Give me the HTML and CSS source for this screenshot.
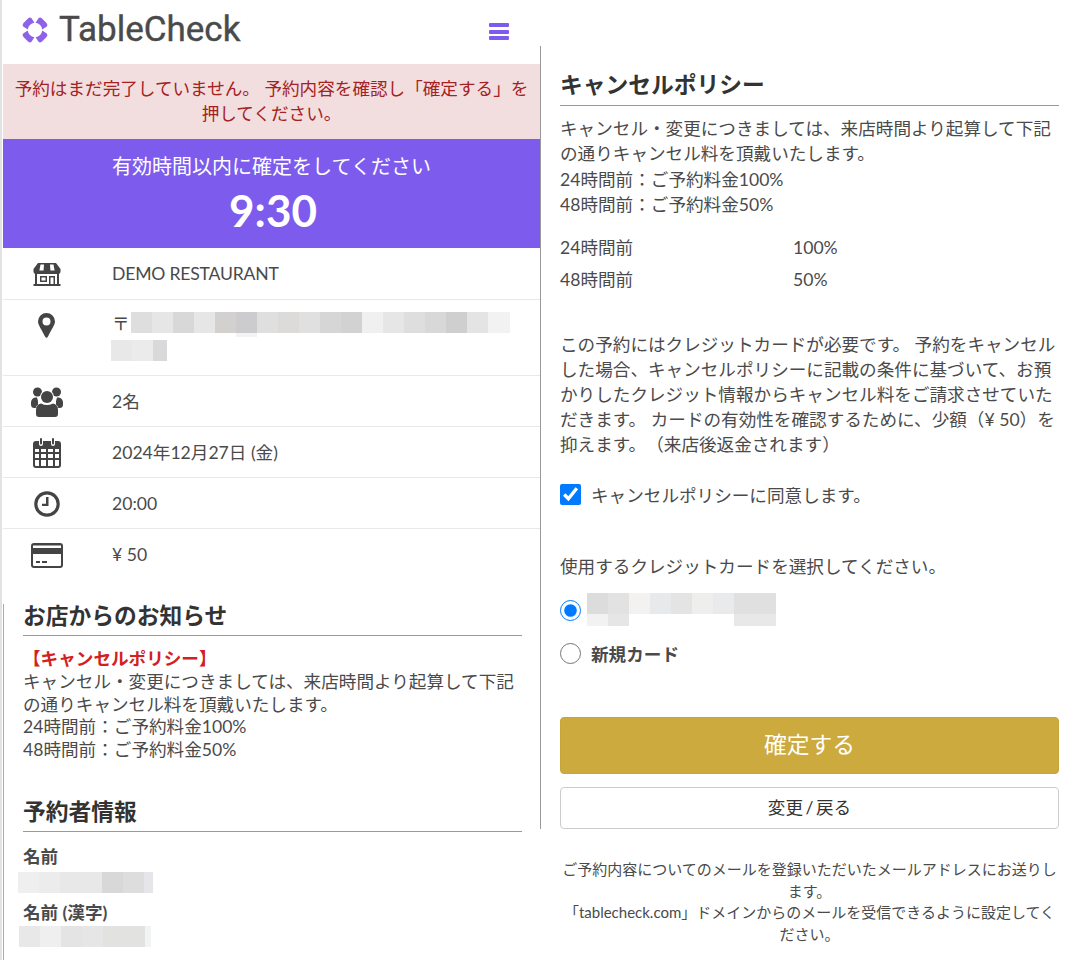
FILE: index.html
```html
<!DOCTYPE html>
<html lang="ja">
<head>
<meta charset="utf-8">
<title>TableCheck</title>
<link rel="stylesheet" href="styles.css">
</head>
<body>
<div class="page">
  <main class="left">
    <header class="topbar">
      <div class="logo">
        <svg class="logo-mark" viewBox="0 0 26 26" aria-hidden="true">
          <path d="M6 1.5 Q8 -0.3 9.5 1.2 L12.4 5.8 A7.3 7.3 0 0 0 5.8 12.4 L1.2 9.5 Q-0.3 8 1.5 6 Z"/>
          <path d="M20 1.5 Q18 -0.3 16.5 1.2 L13.6 5.8 A7.3 7.3 0 0 1 20.2 12.4 L24.8 9.5 Q26.3 8 24.5 6 Z"/>
          <path d="M6 24.5 Q8 26.3 9.5 24.8 L12.4 20.2 A7.3 7.3 0 0 1 5.8 13.6 L1.2 16.5 Q-0.3 18 1.5 20 Z"/>
          <path d="M20 24.5 Q18 26.3 16.5 24.8 L13.6 20.2 A7.3 7.3 0 0 0 20.2 13.6 L24.8 16.5 Q26.3 18 24.5 20 Z"/>
        </svg>
        <span class="logo-text">TableCheck</span>
      </div>
      <div class="burger" aria-label="menu"><i></i><i></i><i></i></div>
    </header>

    <div class="alert">予約はまだ完了していません。 予約内容を確認し「確定する」を押してください。</div>

    <section class="timer">
      <div class="timer-title">有効時間以内に確定をしてください</div>
      <div class="timer-count">9:30</div>
    </section>

    <ul class="details">
      <li class="row row-first">
        <span class="row-icon">
          <svg width="28" height="23" viewBox="0 0 28 23" aria-hidden="true">
            <path d="M5 0H23L27.5 6V8.5Q27.5 11 24.5 11H3.5Q.5 11 .5 8.5V6Z"/>
            <path class="cut" d="M7.5 1.5H11L10.6 7.5H6.4ZM17 1.5H20.5L21.6 7.5H17.4Z"/>
            <path d="M2 10H4V21H24V10H26V21H27.5V23H.5V21H2Z"/>
            <path d="M7 13H14V19H7ZM8.5 14.5V17.5H12.5V14.5ZM16 13H22V21H20.5V14.5H17.5V21H16Z"/>
          </svg>
        </span>
        <span class="venue">DEMO RESTAURANT</span>
      </li>
      <li class="row row-address">
        <span class="row-icon">
          <svg width="17" height="25" viewBox="0 0 17 25" aria-hidden="true">
            <path fill-rule="evenodd" d="M8.5 0A8.5 8.5 0 0 1 17 8.5C17 12 13 17 10 23.5Q8.5 26 7 23.5C4 17 0 12 0 8.5A8.5 8.5 0 0 1 8.5 0ZM8.5 4.5A4 4 0 1 0 8.5 12.5A4 4 0 1 0 8.5 4.5Z"/>
          </svg>
        </span>
        <div class="address">
          <div class="address-line"><span class="postal">〒</span><span class="blur blur-addr1"></span></div>
          <div class="blur blur-addr2"></div>
        </div>
      </li>
      <li class="row">
        <span class="row-icon">
          <svg width="32" height="30" viewBox="0 0 32 30" aria-hidden="true">
            <circle cx="6.5" cy="5" r="4.5"/><circle cx="25.5" cy="5" r="4.5"/>
            <path d="M0 15.5A5 5 0 0 1 6 10.5L7 14V21H3.5Q0 21 0 17.5ZM32 15.5A5 5 0 0 0 26 10.5L25 14V21H28.5Q32 21 32 17.5Z"/>
            <circle class="halo" cx="16" cy="10" r="7"/>
            <circle cx="16" cy="10" r="6"/>
            <path class="halo-path" d="M10 16.5Q16 19.5 22 16.5Q27 17.5 27 23V27Q27 30 24 30H8Q5 30 5 27V23Q5 17.5 10 16.5Z"/>
          </svg>
        </span>
        <span>2名</span>
      </li>
      <li class="row">
        <span class="row-icon">
          <svg width="28" height="30" viewBox="0 0 28 30" aria-hidden="true">
            <path fill-rule="evenodd" d="M3 3H6V6Q6 8 8 8T10 6V3H18V6Q18 8 20 8T22 6V3H25Q28 3 28 6V27Q28 30 25 30H3Q0 30 0 27V6Q0 3 3 3ZM2 11V14H6V11ZM8 11V14H13V11ZM15 11V14H20V11ZM22 11V14H26V11ZM2 16V20H6V16ZM8 16V20H13V16ZM15 16V20H20V16ZM22 16V20H26V16ZM2 22V27Q2 28 3 28H6V22ZM8 22V28H13V22ZM15 22V28H20V22ZM22 22V28H25Q26 28 26 27V22Z"/>
            <rect x="7" y="0" width="2" height="6.5" rx="1"/><rect x="19" y="0" width="2" height="6.5" rx="1"/>
          </svg>
        </span>
        <span>2024年12月27日 (金)</span>
      </li>
      <li class="row">
        <span class="row-icon">
          <svg width="26" height="26" viewBox="0 0 26 26" aria-hidden="true">
            <circle class="ring" cx="13" cy="13" r="11.2"/>
            <path d="M12 6H14.5V15H8V12.8H12Z"/>
          </svg>
        </span>
        <span>20:00</span>
      </li>
      <li class="row row-last">
        <span class="row-icon">
          <svg width="32" height="25" viewBox="0 0 32 25" aria-hidden="true">
            <path fill-rule="evenodd" d="M3 0H29Q32 0 32 3V22Q32 25 29 25H3Q0 25 0 22V3Q0 0 3 0ZM2 2.5V5H30V2.5ZM2 11V22Q2 23 3 23H29Q30 23 30 22V11ZM5 18H9V20H5ZM11 18H16V20H11Z"/>
          </svg>
        </span>
        <span>¥ 50</span>
      </li>
    </ul>

    <div class="info">
      <h2 class="heading">お店からのお知らせ</h2>
      <div class="notice">
        <strong class="notice-title">【キャンセルポリシー】</strong><br>
        キャンセル・変更につきましては、来店時間より起算して下記の通りキャンセル料を頂戴いたします。<br>
        24時間前：ご予約料金100%<br>
        48時間前：ご予約料金50%
      </div>
      <h2 class="heading heading-guest">予約者情報</h2>
      <div class="field-label">名前</div>
      <div class="blur blur-name"></div>
      <div class="field-label field-label-2">名前 (漢字)</div>
      <div class="blur blur-kanji"></div>
    </div>
  </main>

  <aside class="right">
    <div class="right-rule">
      <h2 class="heading heading-policy">キャンセルポリシー</h2>
      <p class="policy-text">キャンセル・変更につきましては、来店時間より起算して下記の通りキャンセル料を頂戴いたします。<br>24時間前：ご予約料金100%<br>48時間前：ご予約料金50%</p>
      <div class="fee"><span>24時間前</span><span>100%</span></div>
      <div class="fee"><span>48時間前</span><span>50%</span></div>
      <p class="card-note">この予約にはクレジットカードが必要です。 予約をキャンセルした場合、キャンセルポリシーに記載の条件に基づいて、お預かりしたクレジット情報からキャンセル料をご請求させていただきます。 カードの有効性を確認するために、少額（¥ 50）を抑えます。（来店後返金されます）</p>
      <label class="agree"><input class="check" type="checkbox" checked><span>キャンセルポリシーに同意します。</span></label>
      <p class="select-card">使用するクレジットカードを選択してください。</p>
      <div class="radio-row radio-saved">
        <input class="radio" type="radio" name="card" checked>
        <div class="blur-card"><div class="blur blur-card1"></div><div class="blur blur-card2"></div></div>
      </div>
      <label class="radio-row radio-new"><input class="radio" type="radio" name="card"><strong>新規カード</strong></label>
      <button class="btn-confirm" type="button">確定する</button>
      <button class="btn-back" type="button">変更 / 戻る</button>
    </div>
    <p class="foot">ご予約内容についてのメールを登録いただいたメールアドレスにお送りします。<br>「tablecheck.com」ドメインからのメールを受信できるように設定してください。</p>
  </aside>
</div>
</body>
</html>
```

FILE: styles.css
```css
* { box-sizing: border-box; }
html, body { margin: 0; padding: 0; }
body {
  font-family: Lato, "Noto Sans CJK JP", sans-serif;
  font-size: 17.6px;
  color: #4a4a4a;
  background: #fff;
  overflow: hidden;
  text-spacing-trim: space-all;
}
.page {
  display: flex;
  height: 960px;
  overflow: hidden;
  border-left: 2px solid #e2e2e2;
  padding-left: 1px;
}
.left { width: 537px; flex: none; }
.topbar {
  height: 64px;
  display: flex;
  align-items: flex-start;
  justify-content: space-between;
  padding: 17px 31px 0 19px;
}
.logo { display: flex; align-items: center; gap: 11px; height: 26px; }
.logo-mark { width: 26px; height: 26px; fill: #8d62e8; overflow: visible; }
.logo-text {
  font-family: Roboto, sans-serif;
  font-weight: 400;
  font-size: 35px;
  line-height: 26px;
  color: #4a4a4a;
  -webkit-text-stroke: 0.4px #4a4a4a;
}
.burger { display: flex; flex-direction: column; gap: 2.5px; width: 20px; margin-top: 6px; }
.burger i { display: block; height: 4px; background: #7d5bed; border-radius: 1px; }
.alert {
  height: 75px;
  padding: 12px 10px 0;
  background: #f2dede;
  color: #a52222;
  text-align: center;
  line-height: 25px;
}
.timer { height: 109px; background: #7d5bed; color: #fff; text-align: center; }
.timer-title { font-size: 20px; line-height: 26px; padding-top: 14px; }
.timer-count { font-size: 44px; font-weight: 700; line-height: 56px; margin-top: 3px; padding-left: 3px; }
.details { list-style: none; margin: 0; padding: 0; }
.row {
  display: flex;
  align-items: flex-start;
  min-height: 51px;
  border-bottom: 1px solid #e8e8e8;
  padding-top: 15px;
  line-height: 22px;
  color: #4a4a4a;
}
.row-first { min-height: 52px; }
.venue { letter-spacing: -0.2px; }
.row svg { fill: #444; display: block; }
.row-icon { width: 109px; flex: none; display: flex; justify-content: center; padding-right: 22px; height: 22px; align-items: center; }
.row-address { min-height: 76px; padding-top: 12px; }
.row-address .row-icon { height: 26px; }
.row-last { border-bottom: 0; height: 75px; }
.row svg .cut { fill: #fff; }
.row svg .halo { fill: #fff; }
.row svg .halo-path { stroke: #fff; stroke-width: 1; paint-order: stroke; }
.row svg .ring { fill: none; stroke: #444; stroke-width: 3.2; }
.address { display: flex; flex-direction: column; gap: 7px; }
.address-line { display: flex; align-items: flex-start; height: 21px; }
.postal { line-height: 24px; }
.blur-addr1 {
  width: 379px; height: 25px; margin-left: 1px;
  background:
    linear-gradient(#f3f3f3, #f3f3f3) 105px 21px / 21px 4px no-repeat,
    linear-gradient(90deg,#dedede 0 21px,#e6e6e6 21px 42px,#d8d8d8 42px 63px,#e6e6e6 63px 84px,#d2d1d0 84px 105px,#ccccce 105px 126px,#dfdfdf 126px 147px,#dddbd9 147px 168px,#e0e0e0 168px 189px,#d6d6d6 189px 210px,#d2d2d2 210px 231px,#f0f0f0 231px 252px,#e6e6e6 252px 273px,#dedede 273px 294px,#d8d8d8 294px 315px,#cfcfcf 315px 336px,#e4e4e4 336px 357px,#f2f2f2 357px 379px) 0 0 / 100% 21px no-repeat;
}
.blur-addr2 {
  width: 56px; height: 21px; margin-left: -1px;
  background: linear-gradient(90deg,#e8e8e8 0 21px,#ebebeb 21px 42px,#d9d9db 42px 56px);
}
.info { padding: 0 18px 0 19px; border-left: 1px solid #aaa; height: 356px; }
.heading {
  margin: 0;
  font-size: 22.75px;
  font-weight: 700;
  line-height: 24px;
  color: #333;
  border-bottom: 1px solid #999;
  padding: 0 0 7px;
}
.notice { padding-top: 12px; line-height: 22.75px; }
.notice-title { color: #d32020; font-weight: 700; }
.heading-guest { margin-top: 38px; }
.field-label { font-weight: 700; margin-top: 14px; line-height: 22px; }
.field-label-2 { margin-top: 9px; }
.blur-name {
  width: 135px; height: 21px; margin: 4px 0 0 -5px;
  background: linear-gradient(90deg,#efefef 0 21px,#ececec 21px 42px,#e8e8e8 42px 84px,#d8d8d8 84px 105px,#dddddd 105px 126px,#e6e6ea 126px 135px);
}
.blur-kanji {
  width: 132px; height: 21px; margin: 2px 0 0 -4px;
  background: linear-gradient(90deg,#e8e8e8 0 21px,#efefef 21px 42px,#e4e4e4 42px 63px,#e6e6e6 63px 84px,#e2e2e0 84px 126px,#f2f3f3 126px 132px);
}
.right { flex: 1; padding: 0 21px 0 0; min-width: 0; }
.right-rule {
  margin-top: 46px;
  height: 783px;
  border-left: 1px solid #999;
  padding: 27px 0 0 19px;
}
.heading-policy { padding-bottom: 8px; }
.policy-text { margin: 10px 0 0; line-height: 25.375px; }
.fee { display: flex; line-height: 32px; }
.fee span:first-child { width: 233px; }
.policy-text + .fee { margin-top: 14px; }
.card-note { margin: 36px 0 0; line-height: 25px; }
.agree { display: flex; align-items: center; gap: 10px; margin-top: 26px; height: 24px; }
.check { width: 21px; height: 21px; margin: 0; accent-color: #007bff; }
.select-card { margin: 47px 0 0; line-height: 26px; }
.radio-row { display: flex; align-items: center; gap: 10px; }
.radio { width: 21px; height: 21px; margin: 0; accent-color: #007bff; flex: none; }
.radio-saved { margin-top: 13px; height: 33px; align-items: flex-start; }
.radio-saved .radio { margin-top: 7px; }
.blur-card { margin-left: -4px; }
.blur-card1 {
  width: 189px; height: 21px;
  background: linear-gradient(90deg,#dcdcdc 0 21px,#e2e2e2 21px 42px,#f3f2f0 42px 63px,#e8e9eb 63px 84px,#e4e4e4 84px 105px,#eeeeec 105px 126px,#e9eaec 126px 147px,#e0e0e0 147px 189px);
}
.blur-card2 {
  width: 189px; height: 12px;
  background: linear-gradient(90deg,#f2f2f2 0 21px,#e6e6e6 21px 42px,#fff 42px 147px,#e8e8e8 147px 189px);
}
.radio-new { margin-top: 15px; height: 26px; }
.btn-confirm {
  display: block;
  width: 100%;
  height: 57px;
  margin-top: 50px;
  padding: 0 0 3px;
  border: 1px solid #c7a53a;
  border-radius: 4px;
  background: #ccaa3e;
  color: #fff;
  font: inherit;
  font-size: 22.75px;
}
.btn-back {
  display: block;
  width: 100%;
  height: 42px;
  margin-top: 13px;
  padding: 0 0 2px;
  border: 1px solid #ccc;
  border-radius: 4px;
  background: #fff;
  color: #333;
  font: inherit;
  word-spacing: -2px;
}
.foot {
  margin: 30px 0 0 20px;
  font-size: 15px;
  line-height: 21.6px;
  text-align: center;
}
```
